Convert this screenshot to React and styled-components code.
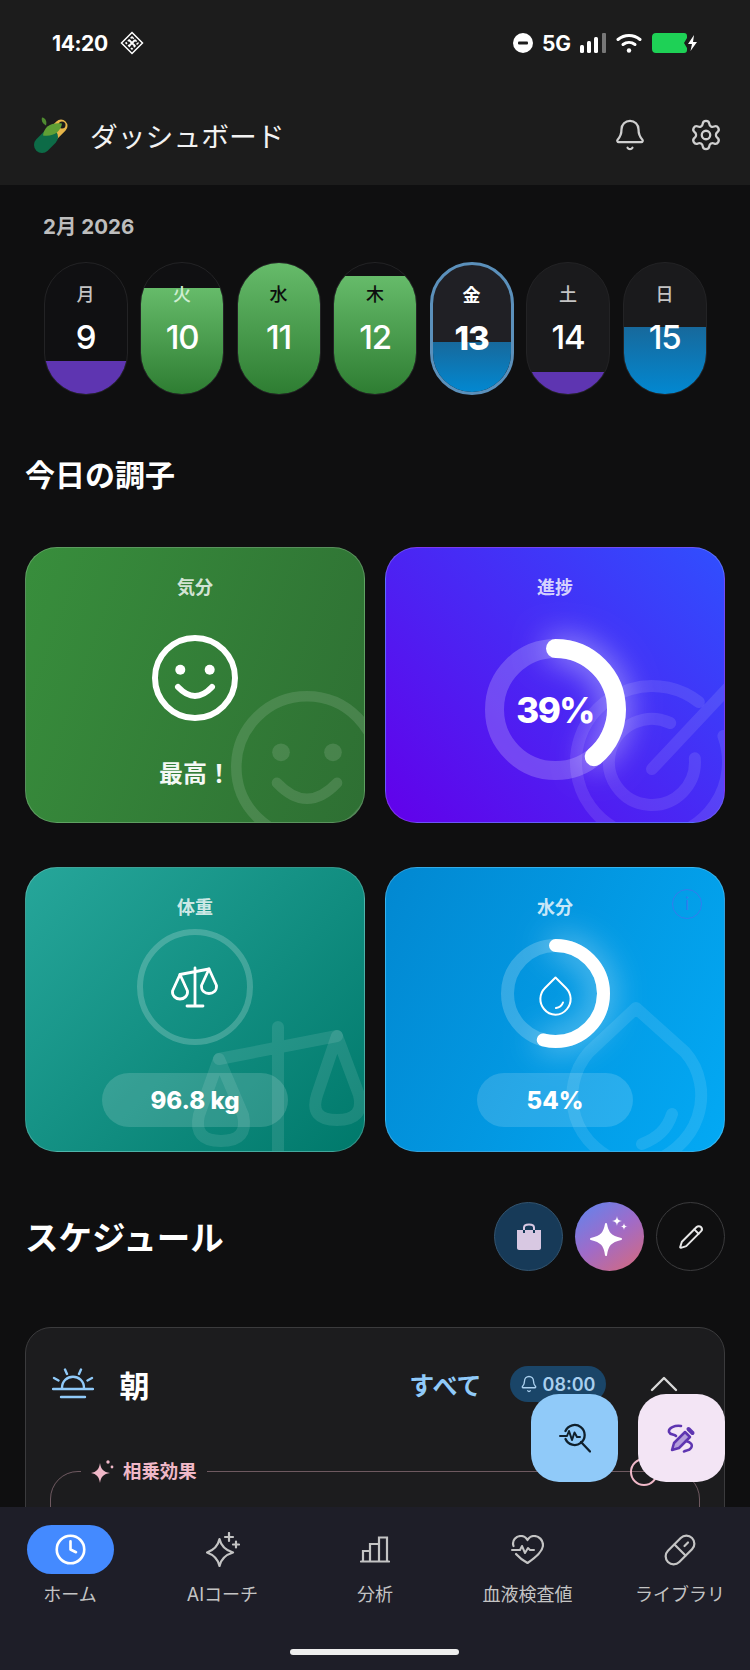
import React from 'react';
import styled, { createGlobalStyle } from 'styled-components';
import { Bell, ChevronUp, Clock, Pencil, Settings } from 'lucide-react';

const GlobalStyle = createGlobalStyle`
  * { box-sizing: border-box; }
  html, body { margin: 0; padding: 0; background: #0f0f10; }
  body {
    font-family: Inter, "Noto Sans CJK JP", sans-serif;
    color: #fff;
  }
`;

const Screen = styled.div`
  position: relative;
  width: 750px;
  height: 1670px;
  overflow: hidden;
  background: #0f0f10;
`;

const TopArea = styled.header`
  background: #1c1c1c;
  height: 185px;
`;

const StatusBar = styled.div`
  height: 86px;
  padding: 0 52px;
  display: flex;
  align-items: center;
  justify-content: space-between;
`;

const StatusGroup = styled.div`
  display: flex;
  align-items: center;
  gap: ${(p) => p.$gap || 12}px;
`;

const StatusText = styled.span`
  font-size: 21px;
  font-weight: 700;
  letter-spacing: -0.4px;
`;

const AppBar = styled.div`
  height: 99px;
  padding: 0 27px 2px 34px;
  display: flex;
  align-items: center;
  gap: 21px;
`;

const AppTitle = styled.h1`
  flex: 1;
  margin: 0;
  font-size: 27.8px;
  font-weight: 400;
  color: #f2f2f2;
`;

const AppActions = styled.div`
  display: flex;
  align-items: center;
  gap: 42px;
  color: #cfcfcf;
`;

const Main = styled.main`
  padding: 0 25px;
`;

const MonthLabel = styled.div`
  margin: 29px 0 22px 18px;
  font-size: 20.500px;
  line-height: 26px;
  font-weight: 700;
  color: #bdbdbd;
`;

const Week = styled.div`
  margin-left: 18.500px;
  display: grid;
  grid-template-columns: repeat(7, 84px);
  gap: 12.500px;
`;

const DayPill = styled.div`
  position: relative;
  height: 133px;
  border-radius: 42px;
  overflow: hidden;
  background: ${(p) => (p.$today ? '#202025' : p.$muted ? '#1a1a1c' : '#101012')};
  border: ${(p) => (p.$today ? '3px solid #5b90bb' : '1.5px solid #232325')};
  display: flex;
  flex-direction: column;
  align-items: center;
`;

const fills = {
  purple: '#5e35b1',
  green: 'linear-gradient(180deg, #66bb6a 0%, #2e7d32 100%)',
  blue: 'linear-gradient(180deg, #17699c 0%, #0288d1 100%)',
};

const DayFill = styled.div`
  position: absolute;
  left: 0;
  right: 0;
  bottom: 0;
  background: ${(p) => fills[p.$tone]};
`;

const DayName = styled.span`
  position: relative;
  margin-top: ${(p) => (p.$today ? 19 : 20)}px;
  font-size: 18px;
  line-height: 24px;
  font-weight: ${(p) => (p.$today ? 700 : 500)};
  color: ${(p) => p.$color};
`;

const DayNumber = styled.span`
  position: relative;
  margin-top: 10px;
  font-size: 33px;
  line-height: 40px;
  letter-spacing: -1.2px;
  font-weight: ${(p) => (p.$today ? 800 : 500)};
`;

const SectionTitle = styled.h2`
  margin: 0;
  font-size: ${(p) => p.$size}px;
  line-height: 40px;
  font-weight: 700;
`;

const TodayHead = styled.div`
  margin: 60px 0 52px;
`;

const TileGrid = styled.div`
  display: grid;
  grid-template-columns: 340px 340px;
  grid-template-rows: 276px 285px;
  gap: 44px 20px;
`;

const Tile = styled.section`
  position: relative;
  overflow: hidden;
  border-radius: 32px;
  border: 1px solid rgba(255, 255, 255, 0.2);
  background: ${(p) => p.$bg};
  padding-top: 28px;
  display: flex;
  flex-direction: column;
  align-items: center;
`;

const TileLabel = styled.div`
  position: relative;
  font-size: 18px;
  line-height: 24px;
  font-weight: 600;
  color: rgba(255, 255, 255, 0.8);
`;

const Watermark = styled.div`
  position: absolute;
  right: ${(p) => p.$right}px;
  bottom: ${(p) => p.$bottom}px;
  line-height: 0;
`;

const Mood = styled.div`
  position: relative;
  margin-top: 35px;
  line-height: 0;
`;

const MoodText = styled.div`
  position: relative;
  margin-top: 36px;
  font-size: 24px;
  line-height: 34px;
  font-weight: 700;
  color: #f4f8f4;
`;

const RingBox = styled.div`
  position: relative;
  margin-top: ${(p) => p.$top}px;
  width: ${(p) => p.$size}px;
  height: ${(p) => p.$size}px;
  display: grid;
  place-items: center;
  & > * {
    grid-area: 1 / 1;
  }
`;

const RingValue = styled.span`
  font-size: 35px;
  font-weight: 800;
  letter-spacing: -1.6px;
`;

const DropSlot = styled.div`
  margin-top: 5px;
  line-height: 0;
`;

const ScaleBadge = styled.div`
  position: relative;
  margin-top: 9px;
  width: 116px;
  height: 116px;
  border-radius: 50%;
  border: 6px solid rgba(255, 255, 255, 0.2);
  display: grid;
  place-items: center;
`;

const ValuePill = styled.div`
  position: relative;
  margin-top: ${(p) => p.$top}px;
  width: ${(p) => p.$width}px;
  height: 54px;
  border-radius: 27px;
  background: rgba(255, 255, 255, 0.15);
  display: flex;
  align-items: center;
  justify-content: center;
  font-size: 24px;
  font-weight: 800;
`;

const InfoMark = styled.div`
  position: absolute;
  top: 21px;
  right: 22px;
  width: 30px;
  height: 30px;
  border-radius: 50%;
  border: 1.5px solid rgba(92, 96, 240, 0.55);
  color: rgba(92, 96, 240, 0.55);
  display: flex;
  align-items: center;
  justify-content: center;
  font-size: 17px;
`;

const ScheduleHead = styled.div`
  margin-top: 50px;
  display: flex;
  align-items: center;
  justify-content: space-between;
`;

const ScheduleTitle = styled(SectionTitle)`
  padding-top: 3px;
`;

const HeadButtons = styled.div`
  display: flex;
  gap: 12px;
`;

const RoundButton = styled.button`
  width: 69px;
  height: 69px;
  padding: 0;
  border-radius: 50%;
  border: ${(p) => p.$border};
  background: ${(p) => p.$bg};
  color: #e8e8e8;
  display: flex;
  align-items: center;
  justify-content: center;
`;

const RoutineCard = styled.section`
  margin-top: 56px;
  padding: 36px 25px 0 25.500px;
  height: 300px;
  background: #1c1c1e;
  border: 1.5px solid #3b3b3d;
  border-radius: 26px;
`;

const RoutineRow = styled.div`
  height: 40px;
  display: flex;
  align-items: center;
`;

const RoutineName = styled.span`
  margin-left: 26px;
  flex: 1;
  font-size: 30px;
  font-weight: 700;
`;

const AllLink = styled.span`
  font-size: 25px;
  font-weight: 700;
  color: #90caf9;
`;

const AlarmChip = styled.span`
  margin-left: 28px;
  width: 96px;
  height: 36px;
  border-radius: 18px;
  background: #1a4568;
  color: #a9cfee;
  display: flex;
  align-items: center;
  justify-content: center;
  gap: 5px;
  font-size: 18px;
  font-weight: 600;
`;

const Collapse = styled.span`
  margin: 0 11.500px 0 34px;
  width: 48px;
  line-height: 0;
  color: #d8d8d8;
`;

const Synergy = styled.fieldset`
  position: relative;
  margin: 55px -1px 0 -1.500px;
  padding: 0;
  min-height: 120px;
  border: 1.5px solid rgba(244, 190, 205, 0.38);
  border-radius: 28px;
`;

const SynergyTag = styled.legend`
  margin-left: 30px;
  padding: 0 10px;
  display: flex;
  align-items: center;
  gap: 8px;
  font-size: 18.400px;
  line-height: 22px;
  font-weight: 700;
  color: #f0b8c8;
`;

const SynergyInfo = styled.span`
  position: absolute;
  top: -25px;
  right: 41px;
  width: 28px;
  height: 28px;
  border-radius: 50%;
  border: 2px solid #f0b8c8;
`;

const FabRow = styled.div`
  position: absolute;
  right: 25px;
  bottom: 188px;
  display: flex;
  gap: 20px;
  z-index: 3;
`;

const Fab = styled.button`
  width: 87px;
  height: 88px;
  padding: 0;
  border: 0;
  border-radius: 28px;
  background: ${(p) => p.$bg};
  display: flex;
  align-items: center;
  justify-content: center;
`;

const BottomNav = styled.nav`
  position: absolute;
  left: 0;
  right: 0;
  bottom: 0;
  height: 163px;
  background: #1e1e28;
  z-index: 2;
`;

const NavItems = styled.div`
  display: grid;
  grid-template-columns: repeat(5, 152.5px);
  justify-content: center;
  padding-top: 18px;
`;

const NavItem = styled.div`
  display: flex;
  flex-direction: column;
  align-items: center;
  gap: 8px;
  color: #c4c4c4;
  font-size: 18px;
  line-height: 26px;
`;

const NavIcon = styled.div`
  width: 87px;
  height: 49px;
  border-radius: 25px;
  background: ${(p) => (p.$active ? '#448aff' : 'transparent')};
  color: ${(p) => (p.$active ? '#fff' : '#c4c4c4')};
  display: flex;
  align-items: center;
  justify-content: center;
`;

const HomeBar = styled.div`
  position: absolute;
  left: 290px;
  bottom: 15px;
  width: 169px;
  height: 6px;
  border-radius: 3px;
  background: #eeeeee;
`;

const days = [
  { name: '月', date: 9, level: 25, tone: 'purple', color: '#c4c4c4' },
  { name: '火', date: 10, level: 81, tone: 'green', color: '#cfeed2' },
  { name: '水', date: 11, level: 100, tone: 'green', color: '#0d0d0d' },
  { name: '木', date: 12, level: 90, tone: 'green', color: '#0d0d0d' },
  { name: '金', date: 13, level: 39, tone: 'blue', color: '#fff', today: true },
  { name: '土', date: 14, level: 17, tone: 'purple', color: '#c4c4c4', muted: true },
  { name: '日', date: 15, level: 51, tone: 'blue', color: '#c4c4c4', muted: true },
];

function Ring({ size, stroke, percent }) {
  const radius = (size - stroke) / 2;
  const length = 2 * Math.PI * radius;
  const center = size / 2;
  return (
    <svg width={size} height={size} style={{ transform: 'rotate(-90deg)', overflow: 'visible' }}>
      <circle cx={center} cy={center} r={radius} fill="none" stroke="rgba(255,255,255,0.2)" strokeWidth={stroke} />
      <circle
        cx={center}
        cy={center}
        r={radius}
        fill="none"
        stroke="#fff"
        strokeWidth={stroke}
        strokeLinecap="round"
        strokeDasharray={`${(length * percent) / 100} ${length}`}
        style={{ filter: 'drop-shadow(0 0 16px rgba(255,255,255,0.6))' }}
      />
    </svg>
  );
}

function Smiley({ size, color }) {
  return (
    <svg width={size} height={size} viewBox="0 0 86 86" fill="none" stroke={color} strokeWidth="6" strokeLinecap="round">
      <circle cx="43" cy="43" r="40" />
      <circle cx="28.3" cy="34.7" r="5" fill={color} stroke="none" />
      <circle cx="57.7" cy="34.7" r="5" fill={color} stroke="none" />
      <path d="M26 52 Q43 70 60 52" />
    </svg>
  );
}

function BalanceIcon() {
  return (
    <svg width="50" height="42" viewBox="0 0 50 42" fill="none" stroke="#fff" strokeWidth="2.800" strokeLinecap="round" strokeLinejoin="round">
      <path d="M25 2V39M17 40H33M10 8.500L39 3" />
      <path d="M10 8.500L2.500 25C2 30 6 33 10 33S18 30 17.500 25Z" />
      <path d="M39 3L31.500 19.500C31 25 35 27.500 39 27.500S47 25 46.500 19.500Z" />
    </svg>
  );
}

function DropIcon() {
  return (
    <svg width="33" height="41" viewBox="0 0 33 41" fill="none" stroke="#fff" strokeWidth="2" strokeLinecap="round" strokeLinejoin="round">
      <path d="M16.500 1.500L6 12C0 18 0 27 5 33C11 40.500 22 40.500 28 33C33 27 33 18 27 12Z" />
      <path d="M17 32C20.500 31.500 23 29.500 24 26.500" />
    </svg>
  );
}

function Logo() {
  return (
    <svg width="35" height="36" viewBox="0 0 35 36" fill="none" strokeLinecap="round">
      <path d="M18 18L27 9" stroke="#e6b54a" strokeWidth="13" />
      <circle cx="28" cy="8" r="3.500" fill="#1c1c1c" />
      <path d="M8 28L16 20" stroke="#0d6b47" strokeWidth="16" />
      <path d="M9 18.500C10 9 18 5 28 6.500C27 14 20 20 9 18.500Z" fill="#5f9f35" />
      <path d="M8 0.500C12 1 13 5 12 8.500C9 7 7 4 8 0.500Z" fill="#4f8a30" />
    </svg>
  );
}

function Diamond() {
  return (
    <svg width="24" height="24" viewBox="0 0 24 24" fill="none" stroke="#fff" strokeWidth="1.500">
      <path d="M12 1.500L22.500 12L12 22.500L1.500 12Z" />
      <path d="M12 6L18 12L12 18L6 12Z" strokeDasharray="2.500 1.500" />
      <path d="M9 9L15 15M15 9L9 15" strokeWidth="1.800" />
    </svg>
  );
}

function DndDot() {
  return (
    <svg width="20" height="20" viewBox="0 0 20 20">
      <circle cx="10" cy="10" r="10" fill="#fff" />
      <rect x="5" y="8.500" width="10" height="3" rx="1" fill="#1c1c1c" />
    </svg>
  );
}

function SignalBars() {
  return (
    <svg width="26" height="20" viewBox="0 0 26 20">
      <rect x="0" y="12" width="4" height="8" rx="1.500" fill="#fff" />
      <rect x="7" y="8" width="4" height="12" rx="1.500" fill="#fff" />
      <rect x="14" y="4" width="4" height="16" rx="1.500" fill="#fff" />
      <rect x="22" y="0" width="4" height="20" rx="1" fill="#777" />
    </svg>
  );
}

function WifiMark() {
  return (
    <svg width="26" height="20" viewBox="0 0 26 20" fill="none" stroke="#fff" strokeWidth="3" strokeLinecap="round">
      <path d="M2 6.500C8.500 1 17.500 1 24 6.500" />
      <path d="M7 11.500C10.500 8.800 15.500 8.800 19 11.500" />
      <circle cx="13" cy="17.500" r="2.200" fill="#fff" stroke="none" />
    </svg>
  );
}

function BatteryMark() {
  return (
    <svg width="47" height="22" viewBox="0 0 47 22">
      <path d="M5 1H33C35 1 36 2 36 4V6L33 11L36 16V18C36 20 35 21 33 21H5C2.500 21 1 19.500 1 17V5C1 2.500 2.500 1 5 1Z" fill="#1ed156" />
      <path d="M43 3L37 12H41L39.500 19L46 10H42Z" fill="#fff" />
    </svg>
  );
}

function BagIcon() {
  return (
    <svg width="26" height="27" viewBox="0 0 26 27">
      <path d="M1 7H25V25C25 26 24 27 23 27H3C2 27 1 26 1 25Z" fill="#d8c8e2" />
      <path d="M8 10V4.500C8 0.500 18 0.500 18 4.500V10" fill="none" stroke="#d8c8e2" strokeWidth="2" />
      <path d="M8 10V7M18 10V7" stroke="#173a58" strokeWidth="2" />
    </svg>
  );
}

function SparkFilled() {
  return (
    <svg width="40" height="42" viewBox="0 0 40 42" fill="#fff">
      <path d="M16 8C17.500 17 20.500 20.500 31 23C20.500 25.500 17.500 29 16 39C14.500 29 11.500 25.500 1 23C11.500 20.500 14.500 17 16 8Z" stroke="#fff" strokeWidth="2" strokeLinejoin="round" />
      <path d="M27 0C27.500 3.500 28.500 4.500 32 5C28.500 5.500 27.500 6.500 27 10C26.500 6.500 25.500 5.500 22 5C25.500 4.500 26.500 3.500 27 0Z" />
      <path d="M34 7C34.300 9.500 35 10.200 37.500 10.500C35 10.800 34.300 11.500 34 14C33.700 11.500 33 10.800 30.500 10.500C33 10.200 33.700 9.500 34 7Z" />
    </svg>
  );
}

function SynergyStar() {
  return (
    <svg width="24" height="24" viewBox="0 0 24 24" fill="#f0b8c8">
      <path d="M9 4C10 10.500 12.500 13 19 14C12.500 15 10 17.500 9 24C8 17.500 5.500 15 0 14C5.500 13 8 10.500 9 4Z" />
      <circle cx="17" cy="3" r="1.700" />
      <circle cx="21" cy="8" r="1.400" />
    </svg>
  );
}

function SunriseIcon() {
  return (
    <svg width="42" height="32" viewBox="0 0 42 32" fill="none" stroke="#90caf9" strokeWidth="2.400" strokeLinecap="round">
      <path d="M10 20C10 5 32 5 32 20" />
      <path d="M1 21H41M9 29H33" />
      <path d="M13 1.500L15 6M29 1.500L27 6M2 10L6.500 12.500M40 10L35.500 12.500" />
    </svg>
  );
}

function PulseSearch() {
  return (
    <svg width="32" height="30" viewBox="0 0 32 30" fill="none" stroke="#10202c" strokeWidth="2.300" strokeLinecap="round" strokeLinejoin="round">
      <path d="M6.500 8A10 10 0 1 1 6.500 16" />
      <path d="M1 13H8L10 8L13 17L15.500 9.500L18 14H21" strokeWidth="2" />
      <path d="M22 19L31 28.500" />
    </svg>
  );
}

function StylusNote() {
  return (
    <svg width="29" height="29" viewBox="0 0 29 29" fill="none" stroke="#5e35b1" strokeWidth="2.500" strokeLinecap="round" strokeLinejoin="round">
      <path d="M5 26L7 19L18 8L23 13L12 24Z" fill="#b39ddb" />
      <path d="M21.500 5L25.500 9" strokeWidth="4" />
      <path d="M14 2C8 1 1 4 2 8C3 11 7 10 9 12" />
      <path d="M19 17C24 18 26 21 24 24C22 27 19 26 17 27.500" />
    </svg>
  );
}

function SparkOutline() {
  return (
    <svg width="34" height="35" viewBox="0 0 34 35" fill="none" stroke="currentColor" strokeWidth="2.200" strokeLinecap="round" strokeLinejoin="round">
      <path d="M13.500 7C15 14 19 18 27 20.500C19 23 15 27 13.500 34C12 27 8 23 1 20.500C8 18 12 14 13.500 7Z" />
      <path d="M23 1V9M19 5H27M30 9.500V15.500M27 12.500H33" />
    </svg>
  );
}

function BarsIcon() {
  return (
    <svg width="30" height="27" viewBox="0 0 30 27" fill="none" stroke="currentColor" strokeWidth="2.200" strokeLinecap="round">
      <path d="M1 25.500H29" />
      <path d="M3 25V15H10V25M10 15V8H19V25M19 8V1.500H27V25" />
    </svg>
  );
}

function HeartLine() {
  return (
    <svg width="33" height="29" viewBox="0 0 33 29" fill="none" stroke="currentColor" strokeWidth="2.200" strokeLinecap="round" strokeLinejoin="round">
      <path d="M2.500 11C0.500 5 5.500 1 10 1C13 1 15 2.500 16.500 5C18 2.500 20 1 23 1C28 1 32 5 32 10C32 17 24 23 16.500 28C13 26 8 22.500 5 19" />
      <path d="M1 15H9L11 11L14 18L17 13L19 15H23" strokeWidth="2" />
    </svg>
  );
}

function CapsuleIcon() {
  return (
    <svg width="32" height="32" viewBox="0 0 32 32" fill="none" stroke="currentColor" strokeWidth="2.200" strokeLinecap="round">
      <rect x="-1" y="8" width="34" height="16" rx="8" transform="rotate(-45 16 16)" />
      <path d="M10.500 10.500L21.500 21.500M20.500 12L24 8.500" />
    </svg>
  );
}

function TargetGhost() {
  return (
    <svg width="190" height="170" viewBox="0 0 190 170" fill="none" stroke="rgba(255,255,255,0.1)" strokeWidth="12" strokeLinecap="round">
      <path d="M166.400 63A76 76 0 1 1 141.800 29.100" />
      <path d="M137.800 85.300A43 43 0 1 1 113.200 50" />
      <path d="M95 96L185 0" />
    </svg>
  );
}

function BalanceGhost() {
  return (
    <svg width="176" height="137" viewBox="0 0 176 137" fill="none" stroke="rgba(255,255,255,0.1)" strokeWidth="12" strokeLinecap="round" strokeLinejoin="round">
      <path d="M89 12V150M30 44L148 21" />
      <path d="M30 44L10 100Q4 126 32 126Q60 126 54 100Z" />
      <path d="M148 21L128 80Q120 105 148 105Q176 105 170 80Z" />
    </svg>
  );
}

function DropGhost() {
  return (
    <svg width="150" height="150" viewBox="0 0 150 150" fill="none" stroke="rgba(255,255,255,0.1)" strokeWidth="12" strokeLinecap="round" strokeLinejoin="round">
      <path d="M71 6L24 50C-7 85 3 150 71 165C139 150 151 85 120 50Z" />
      <path d="M107 112C102 128 92 136 77 142" />
    </svg>
  );
}

export default function App() {
  return (
    <Screen>
      <GlobalStyle />
      <TopArea>
        <StatusBar>
          <StatusGroup>
            <StatusText>14:20</StatusText>
            <Diamond />
          </StatusGroup>
          <StatusGroup $gap={9.5}>
            <DndDot />
            <StatusText>5G</StatusText>
            <SignalBars />
            <WifiMark />
            <BatteryMark />
          </StatusGroup>
        </StatusBar>
        <AppBar>
          <Logo />
          <AppTitle>ダッシュボード</AppTitle>
          <AppActions>
            <Bell size={34} strokeWidth={1.6} />
            <Settings size={34} strokeWidth={1.6} />
          </AppActions>
        </AppBar>
      </TopArea>

      <Main>
        <MonthLabel>2月 2026</MonthLabel>
        <Week>
          {days.map((day) => (
            <DayPill key={day.date} $today={day.today} $muted={day.muted}>
              <DayFill $tone={day.tone} style={{ height: `${day.level}%` }} />
              <DayName $color={day.color} $today={day.today}>{day.name}</DayName>
              <DayNumber $today={day.today}>{day.date}</DayNumber>
            </DayPill>
          ))}
        </Week>

        <TodayHead>
          <SectionTitle $size={30}>今日の調子</SectionTitle>
        </TodayHead>

        <TileGrid>
          <Tile $bg="linear-gradient(110deg, #388e3c 0%, #2e6f33 100%)">
            <Watermark $right={-19} $bottom={-21}>
              <Smiley size={152} color="rgba(255,255,255,0.12)" />
            </Watermark>
            <TileLabel>気分</TileLabel>
            <Mood>
              <Smiley size={86} color="#fff" />
            </Mood>
            <MoodText>最高！</MoodText>
          </Tile>

          <Tile $bg="linear-gradient(45deg, #6200ea 0%, #304ffe 100%)">
            <Watermark $right={-23} $bottom={-21}>
              <TargetGhost />
            </Watermark>
            <TileLabel>進捗</TileLabel>
            <RingBox $top={39} $size={141}>
              <Ring size={141} stroke={19} percent={39} />
              <RingValue>39%</RingValue>
            </RingBox>
          </Tile>

          <Tile $bg="linear-gradient(135deg, #26a69a 0%, #00796b 100%)">
            <Watermark $right={-1} $bottom={-1}>
              <BalanceGhost />
            </Watermark>
            <TileLabel>体重</TileLabel>
            <ScaleBadge>
              <BalanceIcon />
            </ScaleBadge>
            <ValuePill $top={28} $width={186}>96.8 kg</ValuePill>
          </Tile>

          <Tile $bg="linear-gradient(115deg, #0288d1 0%, #03a9f4 100%)">
            <Watermark $right={9} $bottom={-1}>
              <DropGhost />
            </Watermark>
            <InfoMark>i</InfoMark>
            <TileLabel>水分</TileLabel>
            <RingBox $top={19} $size={109}>
              <Ring size={109} stroke={13} percent={54} />
              <DropSlot>
                <DropIcon />
              </DropSlot>
            </RingBox>
            <ValuePill $top={25} $width={156}>54%</ValuePill>
          </Tile>
        </TileGrid>

        <ScheduleHead>
          <ScheduleTitle $size={33.5}>スケジュール</ScheduleTitle>
          <HeadButtons>
            <RoundButton $bg="#173a58" $border="1.5px solid #33546f"><BagIcon /></RoundButton>
            <RoundButton $bg="linear-gradient(145deg, #5c86f0 0%, #a06bc8 50%, #d86a78 100%)" $border="0"><SparkFilled /></RoundButton>
            <RoundButton $bg="transparent" $border="1.5px solid #3b3b3d"><Pencil size={26} strokeWidth={1.8} /></RoundButton>
          </HeadButtons>
        </ScheduleHead>

        <RoutineCard>
          <RoutineRow>
            <SunriseIcon />
            <RoutineName>朝</RoutineName>
            <AllLink>すべて</AllLink>
            <AlarmChip>
              <Bell size={18} strokeWidth={1.8} />
              08:00
            </AlarmChip>
            <Collapse><ChevronUp size={48} strokeWidth={1.2} /></Collapse>
          </RoutineRow>
          <Synergy>
            <SynergyTag>
              <SynergyStar />
              相乗効果
            </SynergyTag>
            <SynergyInfo />
          </Synergy>
        </RoutineCard>
      </Main>

      <FabRow>
        <Fab $bg="#90caf9"><PulseSearch /></Fab>
        <Fab $bg="#f3e5f5"><StylusNote /></Fab>
      </FabRow>

      <BottomNav>
        <NavItems>
          <NavItem>
            <NavIcon $active><Clock size={33} strokeWidth={1.9} /></NavIcon>
            ホーム
          </NavItem>
          <NavItem>
            <NavIcon><SparkOutline /></NavIcon>
            AIコーチ
          </NavItem>
          <NavItem>
            <NavIcon><BarsIcon /></NavIcon>
            分析
          </NavItem>
          <NavItem>
            <NavIcon><HeartLine /></NavIcon>
            血液検査値
          </NavItem>
          <NavItem>
            <NavIcon><CapsuleIcon /></NavIcon>
            ライブラリ
          </NavItem>
        </NavItems>
        <HomeBar />
      </BottomNav>
    </Screen>
  );
}
